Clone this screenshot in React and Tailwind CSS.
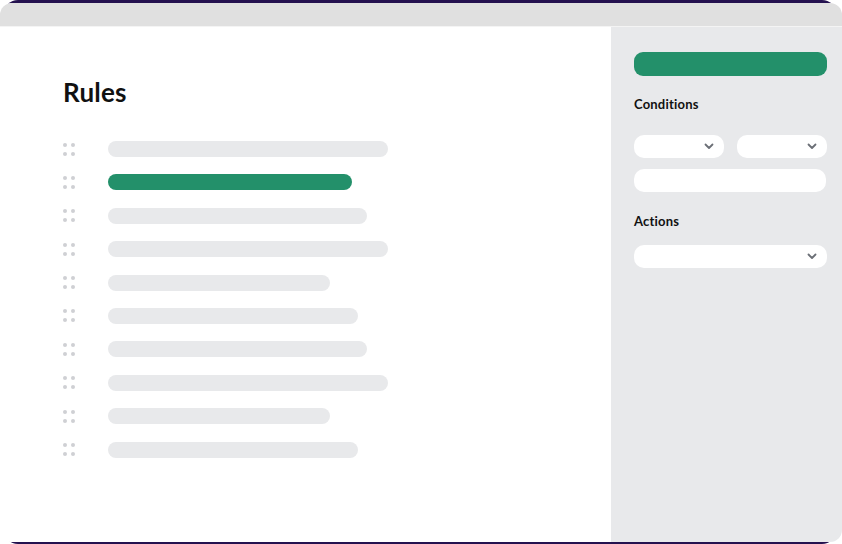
import React from "react";

const widths = [280, 244, 259, 280, 222, 250, 259, 280, 222, 250];

function Handle() {
  return (
    <div className="grid grid-cols-2 gap-x-[4px] gap-y-[5px] w-[12px]">
      {[0, 1, 2, 3].map((i) => (
        <div key={i} className="w-[4px] h-[4px] rounded-full bg-[#cfd0d4]" />
      ))}
    </div>
  );
}

function Chevron() {
  return (
    <svg width="10" height="7" viewBox="0 0 10 7" fill="none">
      <path d="M1.5 1.5L5 5L8.5 1.5" stroke="#6b6f76" strokeWidth="1.8" strokeLinecap="round" strokeLinejoin="round" />
    </svg>
  );
}

function Select({ className = "" }) {
  return (
    <div className={`h-[23px] bg-white rounded-[10px] flex items-center justify-end pr-[10px] ${className}`}>
      <Chevron />
    </div>
  );
}

export default function App() {
  return (
    <div className="relative w-[842px] h-[544px] bg-white overflow-hidden" style={{ fontFamily: "Lato, 'Noto Sans', sans-serif" }}>
      <div className="absolute left-[4px] right-[6px] top-0 bottom-0 rounded-[14px] bg-[#24114f]" />
      <div className="relative mt-[3px] h-[539px] rounded-[12px] overflow-hidden flex flex-col bg-white">
        <div className="h-[23px] bg-[#e0e0e0] shrink-0" />
        <div className="h-[1px] bg-[#f4f4f4] shrink-0" />
        <div className="flex flex-1">
          <div className="w-[611px] bg-white pl-[63px] pt-[52px]">
            <h1 className="text-[26px] font-bold text-[#111] leading-none tracking-[0.2px]">Rules</h1>
            <div className="mt-[36px] flex flex-col gap-[17.4px]">
              {widths.map((w, i) => (
                <div key={i} className="flex items-center h-[16px]">
                  <Handle />
                  <div
                    className={`ml-[33px] h-[16px] rounded-full ${i === 1 ? "bg-[#23906a]" : "bg-[#e8e9eb]"}`}
                    style={{ width: w }}
                  />
                </div>
              ))}
            </div>
          </div>
          <div className="flex-1 bg-[#e8e9eb] pl-[23px] pr-[15px] pt-[25px]">
            <div className="h-[24px] rounded-[9px] bg-[#23906a]" />
            <div className="mt-[21px] text-[13px] font-bold text-[#111] leading-[14px] tracking-[0.2px]">Conditions</div>
            <div className="mt-[24px] flex gap-[13px]">
              <Select className="w-[90px]" />
              <Select className="w-[90px]" />
            </div>
            <div className="mt-[11px] h-[23px] bg-white rounded-[10px] mr-[1px]" />
            <div className="mt-[22px] text-[13px] font-bold text-[#111] leading-[14px] tracking-[0.2px]">Actions</div>
            <Select className="mt-[17px]" />
          </div>
        </div>
      </div>
    </div>
  );
}
